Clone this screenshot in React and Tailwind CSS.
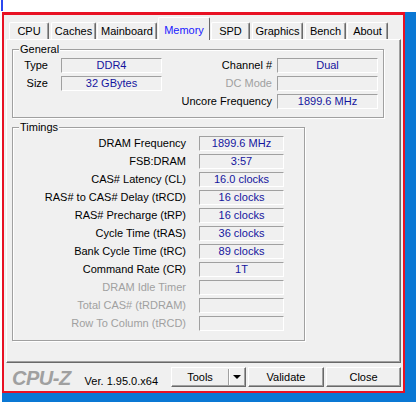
import React from "react";

const tabs = [
  { name: "CPU", cls: "w-[40px] ml-[5px]" },
  { name: "Caches", cls: "w-[45px] ml-[2px]" },
  { name: "Mainboard", cls: "w-[60px] ml-[1px]" },
  { name: "Memory", cls: "w-[52px] ml-[1px]", active: true },
  { name: "SPD", cls: "w-[39px] ml-[1px]" },
  { name: "Graphics", cls: "w-[51px] ml-[2px]" },
  { name: "Bench", cls: "w-[41px] ml-[2px]" },
  { name: "About", cls: "w-[41px] ml-[1px]" },
];

const timings = [
  { label: "DRAM Frequency", value: "1899.6 MHz" },
  { label: "FSB:DRAM", value: "3:57" },
  { label: "CAS# Latency (CL)", value: "16.0 clocks" },
  { label: "RAS# to CAS# Delay (tRCD)", value: "16 clocks" },
  { label: "RAS# Precharge (tRP)", value: "16 clocks" },
  { label: "Cycle Time (tRAS)", value: "36 clocks" },
  { label: "Bank Cycle Time (tRC)", value: "89 clocks" },
  { label: "Command Rate (CR)", value: "1T" },
  { label: "DRAM Idle Timer", value: "", off: true },
  { label: "Total CAS# (tRDRAM)", value: "", off: true },
  { label: "Row To Column (tRCD)", value: "", off: true },
];

const Field = ({ children, className = "" }) => (
  <div
    className={`h-[15px] flex items-center justify-center leading-none text-[#14149e] border border-t-[#a0a0a0] border-l-[#a0a0a0] border-r-white border-b-white ${className}`}
  >
    {children}
  </div>
);

const Group = ({ title, className = "", children }) => (
  <div
    className={`relative border border-[#a0a0a0] shadow-[inset_1px_1px_0_#fff,1px_1px_0_#fff] ${className}`}
  >
    <span className="absolute -top-[7px] left-[6px] bg-[#f0f0f0] px-px leading-[13px]">
      {title}
    </span>
    {children}
  </div>
);

const Btn = ({ children, className = "" }) => (
  <div
    className={`h-[20px] flex items-center justify-center bg-[#f0f0f0] border border-t-white border-l-white border-r-[#696969] border-b-[#696969] shadow-[inset_-1px_-1px_0_#a0a0a0] ${className}`}
  >
    {children}
  </div>
);

export default function App() {
  return (
    <div className="relative w-[416px] h-[402px] overflow-hidden bg-white text-[11px] leading-[15px] text-black font-['Liberation_Sans',Arial,sans-serif]">
      {/* stray blue edge of another window */}
      <div className="absolute left-[1px] top-0 w-[2px] h-[11px] bg-[#2b48f0]" />

      {/* desktop */}
      <div className="mt-[12px] ml-[2px] h-[390px] bg-[#0a78d4]">
        <div className="w-[403px] h-[381px] bg-[#f0f0f0] border-[#e81123] border-t-[3px] border-x-2 border-b-2 flex flex-col">
          {/* Tabs */}
          <div className="h-[24px] flex items-end shrink-0">
            {tabs.map((t) =>
              t.active ? (
                <div
                  key={t.name}
                  className={`relative z-10 h-[23px] -mb-px pt-[3px] flex items-center justify-center bg-[#f0f0f0] text-[#1a1aff] rounded-t-[2px] border-l border-t border-r border-l-white border-t-white border-r-[#696969] ${t.cls}`}
                >
                  {t.name}
                </div>
              ) : (
                <div
                  key={t.name}
                  className={`h-[17px] flex items-center justify-center rounded-t-[2px] border-l border-t border-r border-l-white border-t-white border-r-[#696969] shadow-[inset_-1px_0_0_#a0a0a0] ${t.cls}`}
                >
                  {t.name}
                </div>
              )
            )}
          </div>

          {/* Panel */}
          <div className="ml-[2px] w-[395px] h-[324px] shrink-0 border border-l-white border-t-white border-r-[#696969] border-b-[#696969] shadow-[inset_-1px_-1px_0_#a0a0a0] pl-[5px] pt-[9px]">
            <Group title="General" className="w-[372px] h-[69px] pt-[8px]">
              <div className="flex flex-col gap-[3px]">
                <div className="flex items-center">
                  <span className="w-[35px] text-right">Type</span>
                  <Field className="ml-[13px] w-[101px]">DDR4</Field>
                  <span className="w-[110px] text-right">Channel #</span>
                  <Field className="ml-[5px] w-[101px]">Dual</Field>
                </div>
                <div className="flex items-center">
                  <span className="w-[35px] text-right">Size</span>
                  <Field className="ml-[13px] w-[101px]">32 GBytes</Field>
                  <span className="w-[110px] text-right text-[#a0a0a0]">DC Mode</span>
                  <Field className="ml-[5px] w-[101px]" />
                </div>
                <div className="flex items-center">
                  <span className="w-[259px] text-right">Uncore Frequency</span>
                  <Field className="ml-[5px] w-[101px]">1899.6 MHz</Field>
                </div>
              </div>
            </Group>

            <Group title="Timings" className="mt-[9px] w-[293px] h-[214px] pt-[8px]">
              <div className="flex flex-col gap-[3px]">
                {timings.map((r) => (
                  <div key={r.label} className="flex items-center">
                    <span
                      className={`w-[173px] text-right whitespace-nowrap ${r.off ? "text-[#a0a0a0]" : ""}`}
                    >
                      {r.label}
                    </span>
                    <Field className="ml-[13px] w-[85px]">{r.value}</Field>
                  </div>
                ))}
              </div>
            </Group>
          </div>

          {/* Bottom bar */}
          <div className="h-[28px] flex items-center">
            <div className="ml-[8px] mt-[3px] flex items-baseline">
              <span className="text-[20px] leading-[20px] font-bold italic tracking-[-0.5px] text-[#a0a0a0]">
                CPU-Z
              </span>
              <span className="ml-[14px]">Ver. 1.95.0.x64</span>
            </div>
            <div className="ml-auto mr-[2px] mt-[4px] flex gap-[2px] self-start">
              <Btn className="w-[75px] !justify-start">
                <span className="w-[56px] text-center">Tools</span>
                <span className="w-px h-[16px] bg-[#a0a0a0] shadow-[1px_0_0_#fff]" />
                <span className="flex-1 flex justify-center">
                  <span className="w-0 h-0 border-x-[4px] border-x-transparent border-t-[4px] border-t-black" />
                </span>
              </Btn>
              <Btn className="w-[76px]">Validate</Btn>
              <Btn className="w-[75px]">Close</Btn>
            </div>
          </div>
        </div>
      </div>
    </div>
  );
}
